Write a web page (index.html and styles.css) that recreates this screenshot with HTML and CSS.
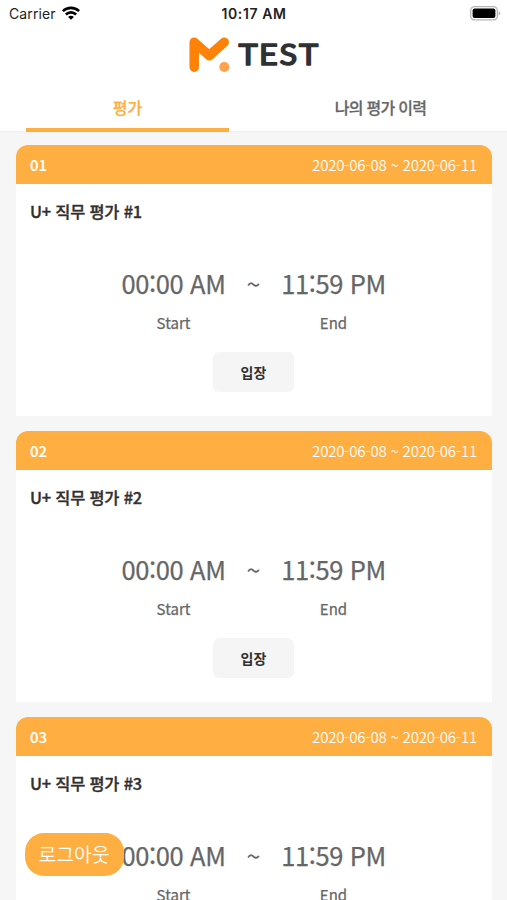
FILE: index.html
```html
<!DOCTYPE html>
<html lang="ko">
<head>
<meta charset="utf-8">
<title>M. TEST</title>
<link rel="stylesheet" href="styles.css">
</head>
<body>
<div class="app">
  <div class="status">
    <div class="carrier"><span>Carrier</span>
      <svg class="wifi" width="18" height="14" viewBox="0 0 18 14" fill="none" stroke="#000" stroke-width="2.6"><path d="M.9 5.2a11.5 11.5 0 0 1 16.2 0"/><path d="M3.9 8.5a7.2 7.2 0 0 1 10.2 0"/><path d="M9 13.8 6.1 10.9a4 4 0 0 1 5.8 0z" fill="#000" stroke="none"/></svg>
    </div>
    <div class="clock">10:17 AM</div>
    <svg class="battery" width="31" height="15" viewBox="0 0 31 15"><rect x=".7" y=".7" width="26.6" height="13.2" rx="3.8" fill="#fff" stroke="#b5b5b5" stroke-width="1.3"/><rect x="2.6" y="2.6" width="22.8" height="9.4" rx="2" fill="#000"/><path d="M28.6 5.2q3.2 2.1 0 4.2z" fill="#aaa"/></svg>
  </div>
  <div class="logo">
    <svg width="132" height="40" viewBox="0 0 132 40">
      <path d="M6.2 33.2V8.2L21.3 21.6 36.2 8.2" fill="none" stroke="#ff8208" stroke-width="9.5" stroke-linecap="round" stroke-linejoin="round"/>
      <circle cx="36.3" cy="33" r="5" fill="#ffa14d"/>
      <text class="wordmark" transform="scale(1.13 1)" x="44.6 62.8 81 98.2" y="31.4">TEST</text>
    </svg>
  </div>
  <nav class="tabs">
    <div class="tab active"><span>평가</span></div>
    <div class="tab"><span>나의 평가 이력</span></div>
  </nav>
  <main class="list">
    <section class="card">
      <header><b>01</b><span>2020-06-08 ~ 2020-06-11</span></header>
      <h2>U+ 직무 평가 #1</h2>
      <div class="times">
        <div class="time"><strong>00:00 AM</strong><small>Start</small></div>
        <div class="tilde">~</div>
        <div class="time"><strong>11:59 PM</strong><small>End</small></div>
      </div>
      <button class="enter">입장</button>
    </section>
    <section class="card">
      <header><b>02</b><span>2020-06-08 ~ 2020-06-11</span></header>
      <h2>U+ 직무 평가 #2</h2>
      <div class="times">
        <div class="time"><strong>00:00 AM</strong><small>Start</small></div>
        <div class="tilde">~</div>
        <div class="time"><strong>11:59 PM</strong><small>End</small></div>
      </div>
      <button class="enter">입장</button>
    </section>
    <section class="card">
      <header><b>03</b><span>2020-06-08 ~ 2020-06-11</span></header>
      <h2>U+ 직무 평가 #3</h2>
      <div class="times">
        <div class="time"><strong>00:00 AM</strong><small>Start</small></div>
        <div class="tilde">~</div>
        <div class="time"><strong>11:59 PM</strong><small>End</small></div>
      </div>
    </section>
  </main>
  <button class="logout">로그아웃</button>
</div>
</body>
</html>
```
FILE: styles.css
```css
* { box-sizing: border-box; }
body { margin: 0; background: #f6f6f6; font-family: "Noto Sans CJK KR", sans-serif; }
button { border: 0; padding: 0; font-family: inherit; }
.app { position: relative; height: 900px; overflow: hidden; }
.status { height: 28px; background: #fff; display: grid; grid-template-columns: 1fr auto 1fr; align-items: center; padding: 0 6px 2px 9px; font-family: Inter, sans-serif; color: #222; }
.carrier { display: flex; align-items: center; gap: 6px; font-size: 14px; letter-spacing: .1px; }
.clock { font-size: 14px; font-weight: 600; letter-spacing: .6px; margin-right: 2px; }
.battery { justify-self: end; }
.logo { height: 57px; background: #fff; display: flex; justify-content: center; padding-top: 6px; }
.wordmark { font-family: Lato, sans-serif; font-weight: 400; font-size: 28.8px; fill: #303133; stroke: #303133; stroke-width: 1.5px; stroke-linejoin: round; }
.tabs { height: 47px; background: #fff; display: grid; grid-template-columns: 1fr 1fr; padding: 0 0 0 1px; border-bottom: 1px solid #f1f1f1; }
.tab { margin: 0 25px; height: 47px; text-align: center; font-size: 16px; line-height: 44px; letter-spacing: -.75px; font-weight: 500; color: #666; white-space: nowrap; -webkit-text-stroke: .25px; }
.active { border-bottom: 4px solid #ffae42; color: #ffae42; letter-spacing: 0; }
.list { padding: 13px 15px 0 16px; display: flex; flex-direction: column; gap: 15px; }
.card { height: 271px; flex: none; background: #fff; border-radius: 12px 12px 0 0; overflow: hidden; display: flex; flex-direction: column; align-items: center; }
.card header { width: 100%; height: 39px; flex: none; background: #ffae42; color: #fff; display: flex; justify-content: space-between; align-items: center; padding: 1px 15px 0 14px; font-size: 15px; line-height: 22px; }
.card header b { font-weight: 500; -webkit-text-stroke: .2px; }
.card header span { font-weight: 350; letter-spacing: -.18px; }
.card h2 { align-self: flex-start; margin: 15px 0 0 14px; font-size: 16.4px; line-height: 24px; font-weight: 500; letter-spacing: -.2px; color: #303030; -webkit-text-stroke: .35px; }
.times { display: flex; margin-top: 39px; color: #666; position: relative; left: -.5px; }
.time { width: 104px; display: flex; flex-direction: column; align-items: center; white-space: nowrap; -webkit-text-stroke: .25px; }
.time strong { font-weight: 400; font-size: 25.5px; line-height: 42px; letter-spacing: -.4px; }
.time small { font-size: 15px; line-height: 22px; margin-top: 8px; }
.tilde { width: 56px; text-align: center; font-size: 25px; line-height: 42px; }
.enter { margin: 18px 1px 0 0; width: 81px; height: 40px; background: #f5f5f5; border-radius: 6px; font-size: 14px; font-weight: 700; color: #303030; }
.logout { position: absolute; left: 25px; top: 833px; width: 99px; height: 43px; padding: 0 1px 2px 0; border-radius: 19px; background: #ffae42; color: #fff; font-size: 19.3px; font-weight: 350; }
```
